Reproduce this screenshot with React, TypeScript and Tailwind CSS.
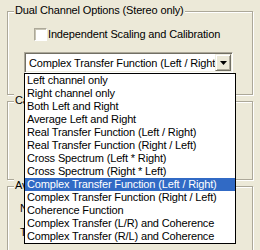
import React from "react";

const items = [
  "Left channel only",
  "Right channel only",
  "Both Left and Right",
  "Average Left and Right",
  "Real Transfer Function (Left / Right)",
  "Real Transfer Function (Right / Left)",
  "Cross Spectrum (Left * Right)",
  "Cross Spectrum (Right * Left)",
  "Complex Transfer Function (Left / Right)",
  "Complex Transfer Function (Right / Left)",
  "Coherence Function",
  "Complex Transfer (L/R) and Coherence",
  "Complex Transfer (R/L) and Coherence",
];

function Group({ label, className, children }: { label: string; className: string; children?: React.ReactNode }) {
  return (
    <div className={`relative ml-[7px] w-[246px] border border-[#ACA899] shadow-[inset_1px_1px_0_#fff,1px_1px_0_#fff] ${className}`}>
      <span className="absolute left-[6px] -top-[8px] bg-[#ECE9D8] px-[1px] leading-[13px] whitespace-nowrap">{label}</span>
      {children}
    </div>
  );
}

export default function App() {
  return (
    <div className="relative w-[260px] h-[250px] overflow-hidden bg-[#ECE9D8] text-[11px] tracking-[-0.15px] text-black font-['Liberation_Sans',Arial,sans-serif]">
      <div className="pt-[11px] flex flex-col">
        <Group label="Dual Channel Options (Stereo only)" className="h-[84px]">
          <div className="flex items-center mt-[16px] ml-[26px] gap-[1px]">
            <div className="w-[13px] h-[13px] bg-white border border-t-[#ACA899] border-l-[#ACA899] border-b-white border-r-white shadow-[inset_1px_1px_0_#C8C5B5]" />
            <span className="leading-[13px] whitespace-nowrap">Independent Scaling and Calibration</span>
          </div>
          <div className="mt-[11px] ml-[16px] w-[209px] h-[21px] bg-white border border-t-[#ACA899] border-l-[#ACA899] border-b-white border-r-white shadow-[inset_1px_1px_0_#716F64,inset_-1px_-1px_0_#F1EFE2] flex items-stretch p-[1px]">
            <div className="flex-1 overflow-hidden whitespace-nowrap pl-[3px] leading-[19px]">Complex Transfer Function (Left / Right)</div>
            <div className="w-[16px] bg-[#ECE9D8] border border-t-[#F1EFE2] border-l-[#F1EFE2] border-b-[#716F64] border-r-[#716F64] shadow-[inset_1px_1px_0_#fff,inset_-1px_-1px_0_#ACA899] flex items-center justify-center">
              <svg width="7" height="4" viewBox="0 0 7 4"><path d="M0 0H7L3.5 4Z" fill="#000" /></svg>
            </div>
          </div>
        </Group>
        <Group label="Calibration" className="mt-[6px] h-[79px]" />
        <Group label="Averaging" className="mt-[6px] h-[70px]">
          <div className="ml-[12px] mt-[15px] leading-[13px]">Number of averages</div>
          <div className="ml-[12px] mt-[11px] leading-[13px]">Type</div>
        </Group>
      </div>

      <div className="absolute left-[24px] top-[73px] w-[212px] border border-black bg-white">
        {items.map((t, i) => (
          <div
            key={t}
            className={`h-[13px] leading-[13px] pl-[2px] whitespace-nowrap ${i === 8 ? "bg-[#316AC5] text-white" : ""}`}
          >
            {t}
          </div>
        ))}
      </div>
    </div>
  );
}
